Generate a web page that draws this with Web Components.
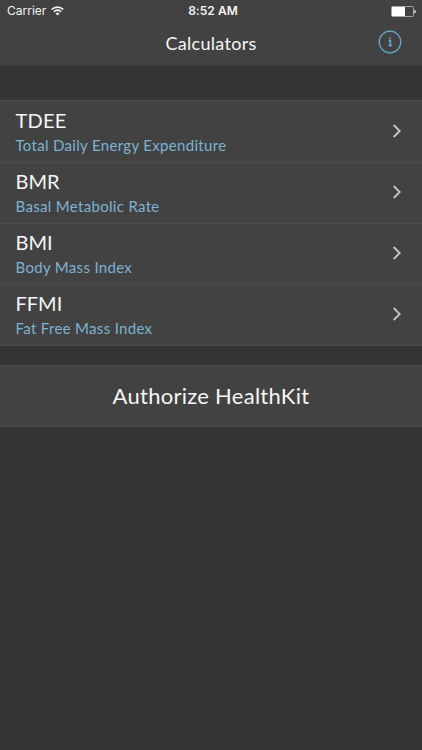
<!DOCTYPE html>
<html lang="en">
<head>
<meta charset="utf-8">
<title>Calculators</title>
<style>
  body {
    margin: 0;
    background: #343434;
    font-family: Lato, "Liberation Sans", sans-serif;
    color: #f6f6f6;
  }
</style>
</head>
<body>
<calc-app>
  <status-bar slot="top" carrier="Carrier" time="8:52 AM"></status-bar>
  <nav-bar slot="top">Calculators</nav-bar>
  <cell-group>
    <calc-row style="--title-track: 0.2px">TDEE<span slot="sub">Total Daily Energy Expenditure</span></calc-row>
    <calc-row>BMR<span slot="sub">Basal Metabolic Rate</span></calc-row>
    <calc-row>BMI<span slot="sub">Body Mass Index</span></calc-row>
    <calc-row>FFMI<span slot="sub">Fat Free Mass Index</span></calc-row>
  </cell-group>
  <cell-group>
    <action-row>Authorize HealthKit</action-row>
  </cell-group>
</calc-app>

<script>
// Page shell: header on top, groups stacked below
class CalcApp extends HTMLElement {
    constructor() {
        super();
        this.shadow = this.attachShadow({ mode: "open" });
    }

    connectedCallback() {
        this.shadow.innerHTML = `
        <style>
          :host {
            display: flex;
            flex-direction: column;
            height: 750px;
            overflow: hidden;
          }
          header {
            height: 65px;
            background: #424242;
            border-bottom: 1px solid #3b3b3b;
          }
          main {
            display: flex;
            flex-direction: column;
            gap: 19px;
            padding-top: 34px;
          }
        </style>
        <header><slot name="top"></slot></header>
        <main><slot></slot></main>
      `;
    }
}
window.customElements.define("calc-app", CalcApp);


class StatusBar extends HTMLElement {
    constructor() {
        super();
        this.shadow = this.attachShadow({ mode: "open" });
    }

    connectedCallback() {
        this.shadow.innerHTML = `
        <style>
          :host {
            display: grid;
            grid-template-columns: 1fr auto 1fr;
            align-items: center;
            height: 22px;
            padding: 0 6px 0 7px;
            box-sizing: border-box;
            font: 12px/22px Inter, "Liberation Sans", sans-serif;
            color: #f4f4f4;
          }
          .left { display: flex; align-items: center; gap: 5px; }
          .time { font-weight: 600; padding-left: 3px; letter-spacing: 0.05px; }
          .battery { justify-self: end; }
          svg { display: block; }
        </style>
        <div class="left">
          <span>${this.getAttribute("carrier")}</span>
          <svg width="13" height="10" viewBox="0 0 13 10" fill="none" stroke="#f4f4f4" stroke-width="1.6">
            <path d="M0.7 3.5a8.2 8.2 0 0 1 11.6 0"/>
            <path d="M2.8 5.7a5.2 5.2 0 0 1 7.4 0"/>
            <path d="M6.5 9.6L4.5 7.5a2.9 2.9 0 0 1 4 0z" fill="#f4f4f4" stroke="none"/>
          </svg>
        </div>
        <span class="time">${this.getAttribute("time")}</span>
        <svg class="battery" width="25" height="11" viewBox="0 0 25 11">
          <rect x="0.5" y="0.5" width="22" height="10" rx="1" fill="none" stroke="#a6a6a6"/>
          <rect x="1" y="1" width="13" height="9" fill="#fff"/>
          <path d="M23.3 3.8v3.6q1.6-.4 1.6-1.8t-1.6-1.8z" fill="#eee"/>
        </svg>
      `;
    }
}
window.customElements.define("status-bar", StatusBar);


class NavBar extends HTMLElement {
    constructor() {
        super();
        this.shadow = this.attachShadow({ mode: "open" });
    }

    connectedCallback() {
        this.shadow.innerHTML = `
        <style>
          :host {
            display: grid;
            grid-template-columns: 1fr auto 1fr;
            align-items: center;
            height: 42px;
            padding: 0 20px;
          }
          .title {
            grid-column: 2;
            font-size: 18px;
            line-height: 42px;
            letter-spacing: 0.3px;
          }
          svg { justify-self: end; margin-top: -2px; }
        </style>
        <span class="title"><slot></slot></span>
        <svg width="24" height="24" viewBox="0 0 24 24" fill="none" stroke="#62a9d2">
          <circle cx="12" cy="12" r="10.8" stroke-width="1.3"/>
          <path d="M10.5 10.7h1.9v4.7M10.4 15.5h3.6" stroke-width="1.5"/>
          <circle cx="12.1" cy="8.4" r="1" fill="#62a9d2" stroke="none"/>
        </svg>
      `;
    }
}
window.customElements.define("nav-bar", NavBar);


class CellGroup extends HTMLElement {
    constructor() {
        super();
        this.shadow = this.attachShadow({ mode: "open" });
    }

    connectedCallback() {
        this.shadow.innerHTML = `
        <style>
          :host {
            display: block;
            background: #424242;
            border-top: 1px solid #4d4d4d;
          }
          :host(:first-of-type) { padding-top: 1px; }
        </style>
        <slot></slot>
      `;
    }
}
window.customElements.define("cell-group", CellGroup);


// Title + subtitle with a disclosure chevron
class CalcRow extends HTMLElement {
    constructor() {
        super();
        this.shadow = this.attachShadow({ mode: "open" });
    }

    connectedCallback() {
        this.shadow.innerHTML = `
        <style>
          :host {
            display: flex;
            align-items: center;
            justify-content: space-between;
            box-sizing: border-box;
            height: 61px;
            padding: 0 20px 0 15.5px;
            border-bottom: 1px solid #4d4d4d;
          }
          .title {
            margin: -2px 0 1px;
            font-size: 20px;
            line-height: 26px;
            letter-spacing: var(--title-track, 0);
          }
          .sub {
            font-size: 15px;
            line-height: 22px;
            letter-spacing: 0.32px;
            color: #7db3d3;
          }
          svg { margin-top: -3px; }
        </style>
        <div>
          <div class="title"><slot></slot></div>
          <div class="sub"><slot name="sub"></slot></div>
        </div>
        <svg width="10" height="14" viewBox="0 0 10 14" fill="none" stroke="#c6c6c6" stroke-width="1.8">
          <path d="M1.7 1l6 6-6 6"/>
        </svg>
      `;
    }
}
window.customElements.define("calc-row", CalcRow);


class ActionRow extends HTMLElement {
    constructor() {
        super();
        this.shadow = this.attachShadow({ mode: "open" });
    }

    connectedCallback() {
        this.shadow.innerHTML = `
        <style>
          :host {
            display: block;
            box-sizing: border-box;
            height: 61px;
            border-bottom: 1px solid #4d4d4d;
            font-size: 22px;
            line-height: 60px;
            letter-spacing: 0.27px;
            text-align: center;
          }
        </style>
        <slot></slot>
      `;
    }
}
window.customElements.define("action-row", ActionRow);
</script>
</body>
</html>
